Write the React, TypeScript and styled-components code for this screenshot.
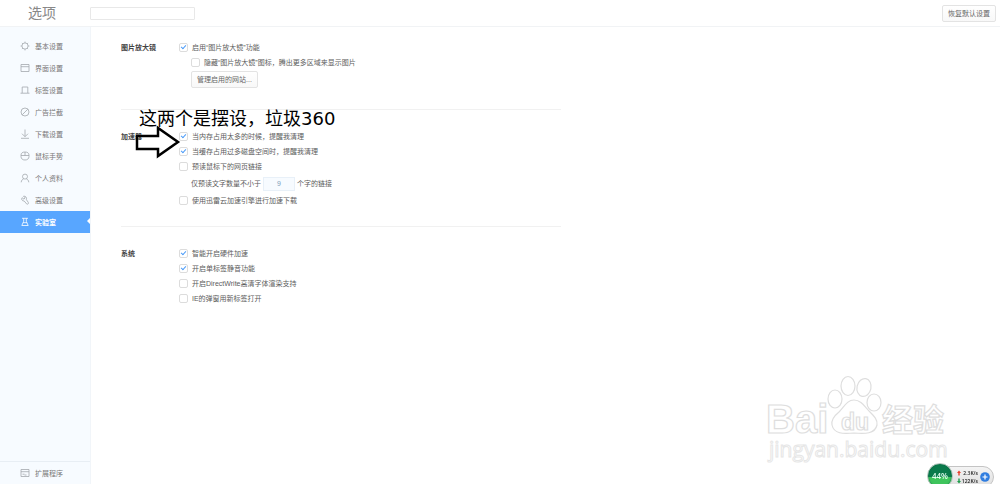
import React from "react";
import styled, { createGlobalStyle } from "styled-components";

const GlobalStyle = createGlobalStyle`
  *, *::before, *::after { box-sizing: border-box; }
  body {
    margin: 0;
    background: #fff;
    color: #5c5c5c;
    font: 7px/15px "Liberation Sans", "Noto Sans CJK SC", sans-serif;
  }
  button, input { font: inherit; color: inherit; }
`;

const Page = styled.div`
  min-height: 100vh;
  display: flex;
  flex-direction: column;
  position: relative;
`;

const Header = styled.header`
  height: 27px;
  padding: 0 4px 0 28px;
  display: flex;
  align-items: center;
  border-bottom: 1px solid #f1f3f5;
`;

const Title = styled.h1`
  margin: 0;
  width: 62px;
  font-size: 14px;
  line-height: 20px;
  font-weight: 400;
  color: #888;
`;

const Search = styled.input`
  width: 105px;
  height: 13px;
  padding: 0 4px;
  border: 1px solid #e8e8e8;
  border-radius: 1px;
  outline: 0;
`;

const Button = styled.button`
  height: 17px;
  padding: 0 5px;
  border: 1px solid #e3e3e3;
  border-radius: 2px;
  background: linear-gradient(#fff, #f8f8f8);
  line-height: 15px;
  white-space: nowrap;
  color: #666;
`;

const ResetButton = styled(Button)`
  margin-left: auto;
`;

const Body = styled.div`
  flex: 1;
  display: flex;
`;

const Sidebar = styled.nav`
  width: 91px;
  padding-top: 8px;
  display: flex;
  flex-direction: column;
  background: #f7fbff;
  border-right: 1px solid #f1f5f9;
`;

const NavItem = styled.a<{ $active?: boolean }>`
  position: relative;
  height: 22px;
  padding-left: 20px;
  display: flex;
  align-items: center;
  gap: 5px;
  text-decoration: none;
  color: ${(p) => (p.$active ? "#fff" : "#777")};
  background: ${(p) => (p.$active ? "#58a6ff" : "transparent")};
  font-weight: ${(p) => (p.$active ? 700 : 400)};

  &::after {
    content: "";
    display: ${(p) => (p.$active ? "block" : "none")};
    position: absolute;
    right: 0;
    top: 7px;
    border: solid transparent;
    border-width: 3px 3px 3px 0;
    border-right-color: #fff;
  }
`;

const NavIcon = styled.svg<{ $active?: boolean }>`
  width: 10px;
  height: 10px;
  fill: none;
  stroke: ${(p) => (p.$active ? "#fff" : "#a3a8ad")};
  stroke-width: 0.8;
`;

const SidebarFooter = styled.div`
  margin-top: auto;
  border-top: 1px solid #e8eef4;
`;

const Content = styled.main`
  flex: 1;
  padding: 0 30px;
`;

const Section = styled.section`
  max-width: 440px;
  padding: 19px 0 18px;
  display: grid;
  grid-template-columns: 58px 1fr;

  &:first-child { padding: 13px 0 20px; }
  & + & { border-top: 1px solid #f1f1f1; }
`;

const SectionTitle = styled.h2`
  margin: 0;
  font-size: 7px;
  line-height: 15px;
  font-weight: 700;
  color: #444;
`;

const Row = styled.div<{ $indent?: boolean; $tall?: boolean }>`
  height: ${(p) => (p.$tall ? 19 : 15)}px;
  padding-left: ${(p) => (p.$indent ? 12 : 0)}px;
  display: flex;
  align-items: center;
`;

const Label = styled.label`
  display: flex;
  align-items: center;
  gap: 4px;
  white-space: nowrap;
`;

const Tick = styled.input.attrs({ type: "checkbox" })`
  appearance: none;
  position: relative;
  width: 9px;
  height: 9px;
  margin: 0;
  border: 1px solid #dcdcdc;
  border-radius: 2px;
  background: #fff;

  &:checked::after {
    content: "";
    position: absolute;
    left: 2px;
    top: 0;
    width: 3px;
    height: 5px;
    border: solid #4a9bf8;
    border-width: 0 1px 1px 0;
    transform: rotate(42deg);
  }
`;

const NumberBox = styled.input`
  width: 32px;
  height: 14px;
  margin: 0 2px;
  padding: 0;
  border: 1px solid #e8f0f8;
  background: #f7fbff;
  text-align: center;
  color: #7f9db9;
`;

const Annotation = styled.div`
  position: absolute;
  left: 139px;
  top: 107px;
  font: 18px/24px "DejaVu Sans", "Noto Sans CJK SC", sans-serif;
  color: #000;
  white-space: nowrap;
`;

const Arrow = styled.svg`
  position: absolute;
  left: 134px;
  top: 125px;
  width: 48px;
  height: 34px;
`;

const Watermark = styled.svg`
  position: absolute;
  right: 50px;
  bottom: 19px;
  width: 190px;
  height: 95px;
  fill: #fff;
  stroke: #dedede;
  stroke-width: 1.2;
`;

const SpeedWidget = styled.aside`
  position: fixed;
  right: 6px;
  bottom: -4px;
  width: 64px;
  height: 22px;
  padding: 2px 3px 0 26px;
  display: flex;
  gap: 2px;
  border: 1px solid #c4c4c4;
  border-radius: 11px;
  background: linear-gradient(#f4f4f4, #dedede);
`;

const Gauge = styled.div`
  position: absolute;
  left: -4px;
  top: -4px;
  width: 26px;
  height: 26px;
  border: 1px solid #b5c4bc;
  border-radius: 50%;
  background: linear-gradient(#0a7a4b 0 56%, #3fc45c 56%);
  box-shadow: inset 0 0 2px #064;
  text-align: center;
  font: 600 8px/24px "Open Sans", sans-serif;
  color: #e4fff0;
`;

const Rates = styled.div`
  flex: 1;
  font: 600 5px/8px "Open Sans", sans-serif;
  color: #222;
`;

const Rate = styled.div`
  display: flex;
  justify-content: space-between;
`;

const RateArrow = styled.svg<{ $up?: boolean }>`
  width: 4px;
  height: 8px;
  fill: ${(p) => (p.$up ? "#e8402c" : "#1f9d4c")};
`;

const Plus = styled.svg`
  width: 10px;
  height: 10px;
  margin-top: 3px;
`;

const navItems: { label: string; icon: React.ReactNode }[] = [
  {
    label: "基本设置",
    icon: (
      <>
        <circle cx="5" cy="5" r="3.1" />
        <path d="M5 .6v1.3M5 8.1v1.3M.6 5h1.3M8.1 5h1.3M1.9 1.9l.9.9M7.2 7.2l.9.9M1.9 8.1l.9-.9M7.2 2.8l.9-.9" />
      </>
    ),
  },
  { label: "界面设置", icon: <path d="M1 1.5h8v7H1zM1 3.7h8" /> },
  { label: "标签设置", icon: <path d="M.5 8.2h1.7V2h5.6v6.2h1.7M2.2 8.2h5.6" /> },
  {
    label: "广告拦截",
    icon: (
      <>
        <circle cx="5" cy="5" r="4" />
        <path d="M2.2 7.8l5.6-5.6" />
      </>
    ),
  },
  { label: "下载设置", icon: <path d="M5 .5v7M2 4.7l3 3 3-3M1 9.3h8" /> },
  {
    label: "鼠标手势",
    icon: <path d="M5 1C2.4 1 1 2.2 1 4v1.5C1 7.8 2.7 9 5 9s4-1.2 4-3.5V4C9 2.2 7.6 1 5 1zM1 4.5h8M5 1v3.5" />,
  },
  {
    label: "个人资料",
    icon: (
      <>
        <circle cx="5" cy="3.6" r="2.5" />
        <path d="M1.2 9.3c.2-2 1.2-3 2.5-3.5M8.8 9.3c-.2-2-1.2-3-2.5-3.5" />
      </>
    ),
  },
  {
    label: "高级设置",
    icon: <path d="M3.5 1.2l1.5 1.6-1 1.4-1.9-1.5C1 4 2 6.2 4.2 6l2.4 2.9c1 .9 2.4-.3 1.7-1.5L6.400 4.700C7 2.500 5.600.8 3.500 1.200z" />,
  },
  { label: "实验室", icon: <path d="M2 1.3h6M3.7 1.3v3L1.8 8.5h6.4L6.3 4.3v-3M3 5.7h4" /> },
];

const CheckRow = ({ text, checked, indent }: { text: string; checked?: boolean; indent?: boolean }) => (
  <Row $indent={indent}>
    <Label>
      <Tick defaultChecked={checked} />
      {text}
    </Label>
  </Row>
);

export default function App() {
  return (
    <Page>
      <GlobalStyle />
      <Header>
        <Title>选项</Title>
        <Search type="text" aria-label="搜索" />
        <ResetButton>恢复默认设置</ResetButton>
      </Header>
      <Body>
        <Sidebar>
          {navItems.map(({ label, icon }) => {
            const active = label === "实验室";
            return (
              <NavItem key={label} href="#" $active={active}>
                <NavIcon viewBox="0 0 10 10" $active={active}>{icon}</NavIcon>
                {label}
              </NavItem>
            );
          })}
          <SidebarFooter>
            <NavItem href="#">
              <NavIcon viewBox="0 0 10 10">
                <path d="M1 1.5h8v7H1zM1 3.7h8M2.5 6.2h2M4.5 7h2" />
              </NavIcon>
              扩展程序
            </NavItem>
          </SidebarFooter>
        </Sidebar>
        <Content>
          <Section>
            <SectionTitle>图片放大镜</SectionTitle>
            <div>
              <CheckRow checked text="启用“图片放大镜”功能" />
              <CheckRow indent text="隐藏“图片放大镜”图标，腾出更多区域来显示图片" />
              <Row $indent $tall>
                <Button>管理启用的网站...</Button>
              </Row>
            </div>
          </Section>
          <Section>
            <SectionTitle>加速器</SectionTitle>
            <div>
              <CheckRow checked text="当内存占用太多的时候，提醒我清理" />
              <CheckRow checked text="当缓存占用过多磁盘空间时，提醒我清理" />
              <CheckRow text="预读鼠标下的网页链接" />
              <Row $indent $tall>
                <label htmlFor="min-chars">仅预读文字数量不小于</label>
                <NumberBox id="min-chars" type="text" defaultValue="9" />
                个字的链接
              </Row>
              <CheckRow text="使用迅雷云加速引擎进行加速下载" />
            </div>
          </Section>
          <Section>
            <SectionTitle>系统</SectionTitle>
            <div>
              <CheckRow checked text="智能开启硬件加速" />
              <CheckRow checked text="开启单标签静音功能" />
              <CheckRow text="开启DirectWrite高清字体渲染支持" />
              <CheckRow text="IE的弹窗用新标签打开" />
            </div>
          </Section>
        </Content>
      </Body>

      <Annotation>这两个是摆设，垃圾360</Annotation>
      <Arrow viewBox="0 0 48 34">
        <path d="M3 11h21V3l20 14-20 14v-7H3z" fill="none" stroke="#000" strokeWidth="2.5" />
      </Arrow>

      <Watermark viewBox="0 0 190 95">
        <ellipse cx="75" cy="29" rx="7" ry="9" />
        <ellipse cx="88" cy="16" rx="7" ry="9.5" />
        <ellipse cx="104" cy="17.5" rx="7" ry="9" transform="rotate(12 104 17.5)" />
        <ellipse cx="114" cy="32.5" rx="7" ry="8.5" />
        <path d="M94 30c-7 0-10 7-15 12-5 4-8 8-7 13 2 9 11 9 22 8 11 1 21 1 23-8 1-5-3-9-7-13-5-5-9-12-16-12z" />
        <g fontFamily="Liberation Sans, sans-serif" fontWeight="700">
          <text x="6" y="63" fontSize="40">Bai</text>
          <text x="81" y="60" fontSize="23">du</text>
          <text x="122" y="61" fontSize="31" fontFamily="Noto Sans CJK SC, sans-serif">经验</text>
        </g>
        <text x="9" y="87" fontSize="21" fontFamily="Open Sans, sans-serif" stroke="#e6e6e6" strokeWidth="1">
          jingyan.baidu.com
        </text>
      </Watermark>

      <SpeedWidget>
        <Gauge>44%</Gauge>
        <Rates>
          <Rate>
            <RateArrow $up viewBox="0 0 4 8"><path d="M2 1.5l2 2.5H2.7v2.5H1.3V4H0z" /></RateArrow>
            2.3K/s
          </Rate>
          <Rate>
            <RateArrow viewBox="0 0 4 8"><path d="M2 6.5L0 4h1.3V1.5h1.4V4H4z" /></RateArrow>
            122K/s
          </Rate>
        </Rates>
        <Plus viewBox="0 0 10 10">
          <circle cx="5" cy="5" r="4.8" fill="#2f7de0" />
          <path d="M5 2.5v5M2.5 5h5" stroke="#fff" strokeWidth="1.2" />
        </Plus>
      </SpeedWidget>
    </Page>
  );
}
